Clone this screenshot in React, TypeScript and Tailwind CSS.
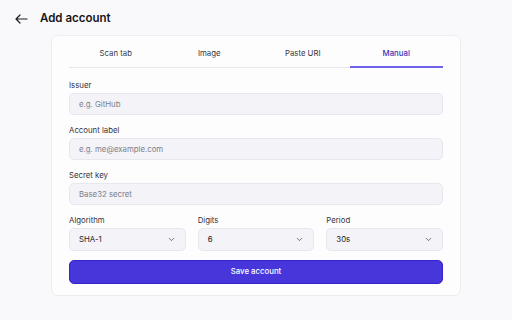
import React, { useState } from 'react';
import { ChevronDown } from 'lucide-react';

const tabs = ['Scan tab', 'Image', 'Paste URI', 'Manual'];

const Field: React.FC<{ label: string; placeholder: string }> = ({ label, placeholder }) => (
  <div className="flex flex-col">
    <label className="text-[7.8px] text-[#34343e] leading-[8px] mb-[4px]">{label}</label>
    <input
      placeholder={placeholder}
      className="h-[22px] w-full rounded-[5px] border border-[#e7e7ef] bg-[#f3f3f8] px-[9px] text-[7.8px] text-[#2a2a33] placeholder:text-[#7f7f8a] outline-none"
    />
  </div>
);

const Select: React.FC<{ label: string; value: string }> = ({ label, value }) => (
  <div className="flex flex-col">
    <label className="text-[7.8px] text-[#34343e] leading-[8px] mb-[4px]">{label}</label>
    <div className="h-[23px] w-full rounded-[5px] border border-[#e7e7ef] bg-[#f3f3f8] px-[9px] flex items-center justify-between">
      <span className="text-[7.8px] text-[#1a1a22]">{value}</span>
      <ChevronDown className="w-[9px] h-[9px] text-[#4b4b55]" strokeWidth={2} />
    </div>
  </div>
);

export default function App() {
  const [active] = useState('Manual');

  return (
    <div
      className="w-[512px] h-[320px] bg-[#f9f9fb] overflow-hidden"
      style={{ fontFamily: "Inter, 'Noto Sans', sans-serif" }}
    >
      {/* Header */}
      <div className="flex items-center h-[35px] pt-[2px] pl-[15px]">
        <svg width="13" height="10" viewBox="0 0 13 10" fill="none" className="text-[#1d1d24]">
          <path d="M12 5H1.5M5 1L1 5l4 4" stroke="currentColor" strokeWidth="1.2" strokeLinecap="round" strokeLinejoin="round" />
        </svg>
        <h1 className="ml-[12px] text-[11.5px] font-semibold text-[#16161c]">Add account</h1>
      </div>

      {/* Card */}
      <div className="mx-[51px] w-[410px] h-[261px] rounded-[7px] border border-[#ececf1] bg-[#fdfdfe] px-[17px] pt-[6px]">
        <div className="grid grid-cols-4 border-b border-[#e6e6ec]">
          {tabs.map((t) => (
            <div
              key={t}
              className={`h-[26px] flex items-center justify-center text-[7.8px] -mb-px border-b-2 ${
                t === active
                  ? 'text-[#3a31b8] font-medium border-[#6e63ea]'
                  : 'text-[#3a3a44] border-transparent'
              }`}
            >
              {t}
            </div>
          ))}
        </div>

        <div className="flex flex-col gap-[11px] mt-[13px]">
          <Field label="Issuer" placeholder="e.g. GitHub" />
          <Field label="Account label" placeholder="e.g. me@example.com" />
          <Field label="Secret key" placeholder="Base32 secret" />
          <div className="grid grid-cols-3 gap-[12px]">
            <Select label="Algorithm" value="SHA-1" />
            <Select label="Digits" value="6" />
            <Select label="Period" value="30s" />
          </div>
        </div>

        <button className="mt-[9px] w-full h-[24px] rounded-[5px] bg-[#4737da] border border-[#3623cf] text-white text-[7.8px] font-medium">
          Save account
        </button>
      </div>
    </div>
  );
}
